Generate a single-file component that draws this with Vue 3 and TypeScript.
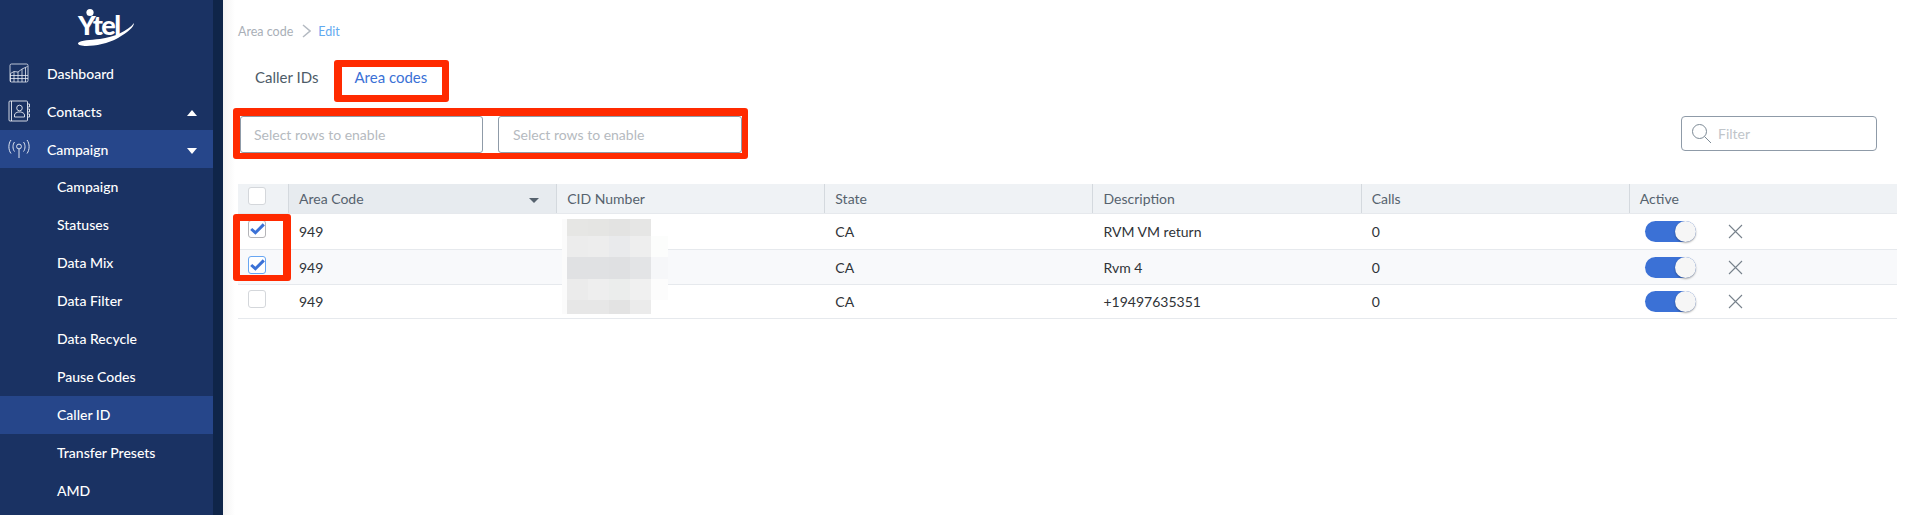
<script setup lang="ts">
interface NavItem { label: string; active?: boolean }
const subItems: NavItem[] = [
  { label: 'Campaign' },
  { label: 'Statuses' },
  { label: 'Data Mix' },
  { label: 'Data Filter' },
  { label: 'Data Recycle' },
  { label: 'Pause Codes' },
  { label: 'Caller ID', active: true },
  { label: 'Transfer Presets' },
  { label: 'AMD' },
]
const rows = [
  { code: '949', state: 'CA', desc: 'RVM VM return', calls: '0', checked: true, focus: false },
  { code: '949', state: 'CA', desc: 'Rvm 4', calls: '0', checked: true, focus: true },
  { code: '949', state: 'CA', desc: '+19497635351', calls: '0', checked: false, focus: false },
]
const blurRows = [
  { h: 17, cells: ['#fbfbfb', '#e6e6e4', '#e5e5e3', '#e3e3e2', '#e6e6e5', '#ffffff'] },
  { h: 21, cells: ['#fbfbfb', '#ececec', '#ededed', '#e9eaec', '#eeeeee', '#fcfdfc'] },
  { h: 22, cells: ['#fbfbfb', '#e0e1e3', '#e0e1e3', '#dfe0e2', '#e3e4e6', '#f6f7f9'] },
  { h: 21, cells: ['#fbfbfb', '#ebebeb', '#eeeeee', '#ebedec', '#f0f0f0', '#fcfcfc'] },
  { h: 14, cells: ['#fbfbfb', '#e7e7e7', '#e7e7e7', '#e3e3e3', '#ebebeb', '#ffffff'] },
]
</script>

<template>
  <div class="page">
    <aside class="sidebar">
      <div class="logo">
        <svg width="60" height="38" viewBox="0 0 60 38">
          <circle cx="13" cy="4.5" r="3.6" fill="#fff" />
          <text x="1" y="27" class="logo-text">Ytel</text>
          <path d="M0 36 C-1 41 24 40 40 31 C50 25 56 20 56 16 C50 24 36 30 22 32 C12 33 3 33 0 36 Z" fill="#fff" transform="translate(1 -1)" />
        </svg>
      </div>
      <nav class="nav">
        <a class="nav-item">
          <svg class="nav-icon ic-dash" width="20" height="20" viewBox="0 0 20 20" fill="none" stroke="#e6eaf2" stroke-width="0.8">
            <rect x="1" y="1" width="18" height="18" rx="1.5" />
            <path d="M1.5 10.5 5 8.5 9 9 13 6 18.5 3.5M1.5 10.5V19M5 8.5V19M9 9V19M13 6V19M16.5 4.5V19M1 12.5H19M1 15.5H19" />
          </svg>
          <span class="nav-label">Dashboard</span>
        </a>
        <a class="nav-item">
          <svg class="nav-icon" width="22" height="22" viewBox="0 0 22 22" fill="none" stroke="#e6eaf2" stroke-width="0.9">
            <rect x="1" y="1" width="18.5" height="20" rx="1" />
            <path d="M3.5 1V21M19.5 4H21.5V7H19.5M19.5 9H21.5V12H19.5M19.5 14H21.5V17H19.5" />
            <circle cx="11.5" cy="8" r="2.8" />
            <path d="M6.5 17V15C6.5 13 9 12.5 10 12L13 12C14 12.5 16.5 13 16.5 15V17Z" />
          </svg>
          <span class="nav-label">Contacts</span>
          <i class="caret up"></i>
        </a>
        <a class="nav-item active">
          <svg class="nav-icon ic-camp" width="22" height="20" viewBox="0 0 22 20" fill="none" stroke="#dfe5f0" stroke-width="1">
            <circle cx="11" cy="7.5" r="2.4" />
            <path d="M11 10V19M6.5 3C4.5 5.5 4.5 10 6.5 12.5M15.5 3C17.5 5.5 17.5 10 15.5 12.5M3 1C0.2 4.5 0.2 11 3 14.5M19 1C21.8 4.5 21.8 11 19 14.5" />
          </svg>
          <span class="nav-label">Campaign</span>
          <i class="caret down"></i>
        </a>
        <a v-for="item in subItems" :key="item.label" class="nav-sub" :class="{ active: item.active }">{{ item.label }}</a>
      </nav>
    </aside>
    <div class="strip"></div>

    <main class="main">
      <div class="crumbs">
        <span>Area code</span>
        <svg class="crumb-sep" width="9" height="14" viewBox="0 0 9 14" fill="none" stroke="#b4bac2" stroke-width="1.5"><path d="M1 1 8 7 1 13" /></svg>
        <span class="crumb-link">Edit</span>
      </div>

      <div class="tabs">
        <span class="tab">Caller IDs</span>
        <span class="tab tab-on">Area codes</span>
      </div>

      <div class="controls">
        <div class="selects">
          <div class="select">Select rows to enable</div>
          <div class="select">Select rows to enable</div>
        </div>
        <div class="filter">
          <svg width="21" height="21" viewBox="0 0 21 21" fill="none" stroke="#7d8a96" stroke-width="1">
            <circle cx="8.5" cy="8.5" r="7" />
            <path d="M13.5 13.5 20 20" />
          </svg>
          <span>Filter</span>
        </div>
      </div>

      <div class="table">
        <div class="row head">
          <div class="cell check"><span class="box"></span></div>
          <div class="cell col sorted">Area Code<i class="sort"></i></div>
          <div class="cell col">CID Number</div>
          <div class="cell col">State</div>
          <div class="cell col">Description</div>
          <div class="cell col">Calls</div>
          <div class="cell col">Active</div>
        </div>
        <div v-for="(r, i) in rows" :key="i" class="row body" :class="{ alt: i === 1 }">
          <div class="cell check">
            <span class="box" :class="{ focus: r.focus, ticked: r.checked && !r.focus }">
              <svg v-if="r.checked" width="15" height="12" viewBox="0 0 15 12" fill="none" stroke="#3b71d6" stroke-width="3"><path d="M1.2 6 5.4 9.8 13.8 1.4" /></svg>
            </span>
          </div>
          <div class="cell">{{ r.code }}</div>
          <div class="cell"></div>
          <div class="cell">{{ r.state }}</div>
          <div class="cell">{{ r.desc }}</div>
          <div class="cell">{{ r.calls }}</div>
          <div class="cell act">
            <span class="toggle"><span class="thumb"></span></span>
            <svg width="15" height="15" viewBox="0 0 15 15" fill="none" stroke="#77828c" stroke-width="1.1"><path d="M1 1 14 14M14 1 1 14" /></svg>
          </div>
        </div>

        <div class="mosaic">
          <div v-for="(b, i) in blurRows" :key="i" class="mosaic-row" :style="{ height: b.h + 'px' }">
            <span v-for="(c, j) in b.cells" :key="j" class="mosaic-cell" :style="{ background: c }"></span>
          </div>
        </div>
      </div>

      <div class="mark mark-tab"></div>
      <div class="mark mark-selects"></div>
      <div class="mark mark-checks"></div>
    </main>
  </div>
</template>

<style>
html, body { margin: 0; background: #fff; overflow: hidden; }
</style>

<style scoped>
.page {
  width: 1911px;
  height: 515px;
  display: flex;
  overflow: hidden;
  font-family: Lato, "Open Sans", sans-serif;
  font-size: 14px;
  color: #2f3338;
}
.sidebar {
  width: 213px;
  flex: none;
  background: #1a3263;
  color: #fff;
}
.strip {
  width: 10px;
  flex: none;
  background: #0f2549;
}
.logo {
  height: 54px;
  display: flex;
  justify-content: center;
  padding-top: 8px;
  box-sizing: border-box;
}
.logo-text {
  font-family: Lato, sans-serif;
  font-weight: 900;
  font-size: 27px;
  letter-spacing: -1.5px;
  fill: #fff;
}
.nav { display: flex; flex-direction: column; }
.nav-item {
  height: 38px;
  display: flex;
  align-items: center;
  position: relative;
  padding-left: 47px;
  font-weight: 500;
}
.nav-icon { position: absolute; left: 8px; top: 8px; }
.ic-dash { left: 9px; top: 9px; }
.ic-camp { top: 9px; }
.nav-item.active, .nav-sub.active { background: #26468a; }
.nav-sub {
  height: 38px;
  line-height: 38px;
  padding-left: 57px;
  font-weight: 500;
}
.caret {
  position: absolute;
  left: 187px;
  top: 18px;
  width: 0;
  height: 0;
  border-left: 5.5px solid transparent;
  border-right: 5.5px solid transparent;
}
.caret.up { border-bottom: 6px solid #fff; }
.caret.down { border-top: 6px solid #fff; }

.main {
  flex: 1;
  position: relative;
  padding: 0 14px 0 15px;
  background: linear-gradient(90deg, #f3f3f3 0, #fff 12px);
}
.crumbs {
  height: 62px;
  display: flex;
  align-items: center;
  color: #a9afb7;
  font-size: 12.5px;
}
.crumb-sep { margin: 0 7px 0 9px; }
.crumb-link { color: #62aaf0; }
.tabs {
  display: flex;
  height: 30px;
  align-items: center;
  padding-left: 17px;
  gap: 36px;
  font-size: 15px;
  color: #4d5b68;
}
.tab-on { color: #3b71d6; }
.controls {
  display: flex;
  justify-content: space-between;
  margin-top: 24px;
  padding-left: 2px;
  padding-right: 20px;
}
.selects { display: flex; gap: 15px; }
.select {
  width: 244px;
  height: 37px;
  box-sizing: border-box;
  border: 1px solid #8f9ba8;
  border-radius: 3px;
  background: #fff;
  color: #b5bac0;
  line-height: 35px;
  padding-left: 14px;
}
.select:first-child { width: 243px; padding-left: 13px; }
.filter {
  width: 196px;
  height: 35px;
  box-sizing: border-box;
  border: 1px solid #8f9ba8;
  border-radius: 4px;
  display: flex;
  align-items: center;
  gap: 6px;
  padding-left: 9px;
  padding-bottom: 1px;
  color: #c0c5ca;
}
.table {
  position: relative;
  margin-top: 31px;
  width: 1659px;
}
.row {
  display: grid;
  grid-template-columns: 50px repeat(6, 1fr);
}
.head {
  height: 30px;
  background: #eff2f5;
  color: #56626e;
  border-bottom: 1px solid #e6e9ed;
  box-sizing: border-box;
}
.head .cell { line-height: 29px; }
.col {
  border-left: 1px solid #d4d9de;
  padding-left: 10px;
  position: relative;
}
.sorted { background: #e7ebef; }
.sort {
  position: absolute;
  right: 17px;
  top: 14px;
  width: 0;
  height: 0;
  border-left: 5px solid transparent;
  border-right: 5px solid transparent;
  border-top: 5px solid #56626e;
}
.body {
  height: 35px;
  box-sizing: border-box;
  border-bottom: 1px solid #e6e9ed;
  align-items: center;
}
.head + .body { height: 36px; }
.body + .body + .body { height: 34px; }
.alt { background: #f8f9fb; }
.body .cell:not(.check) { padding-left: 11px; }
.check {
  display: flex;
  align-items: center;
  padding-left: 10px;
}
.box {
  width: 18px;
  height: 18px;
  margin-top: -5px;
  box-sizing: border-box;
  border: 1.5px solid #d4d7db;
  border-radius: 3px;
  background: #fff;
  display: flex;
  align-items: center;
  justify-content: center;
}
.box.ticked { border-color: #b4b4b8; }
.box.focus { border-color: #68a6f2; }
.act {
  display: flex;
  align-items: center;
  gap: 32px;
  padding-left: 16px !important;
}
.toggle {
  width: 51px;
  height: 21px;
  border-radius: 11px;
  background: #3b71d6;
  position: relative;
}
.thumb {
  position: absolute;
  right: 0;
  top: 0;
  width: 21px;
  height: 21px;
  border-radius: 50%;
  background: #f6f6f6;
  box-shadow: 0 1px 2px rgba(0, 0, 0, .35);
}
.mosaic {
  position: absolute;
  left: 324px;
  top: 35px;
  width: 106px;
  display: flex;
  flex-direction: column;
}
.mosaic-row {
  display: grid;
  grid-template-columns: 5px repeat(4, 21px) 17px;
}
.mark {
  position: absolute;
  border-style: solid;
  border-color: #ff2a00;
  border-radius: 3px;
  box-sizing: border-box;
}
.mark-tab { left: 111px; top: 60px; width: 115px; height: 42px; border-width: 7px 7px 7px 8px; }
.mark-selects { left: 10px; top: 108px; width: 515px; height: 51px; border-width: 8px 6px 6px 7px; }
.mark-checks { left: 10px; top: 214px; width: 58px; height: 67px; border-width: 7px 8px 6px 7px; }
</style>
